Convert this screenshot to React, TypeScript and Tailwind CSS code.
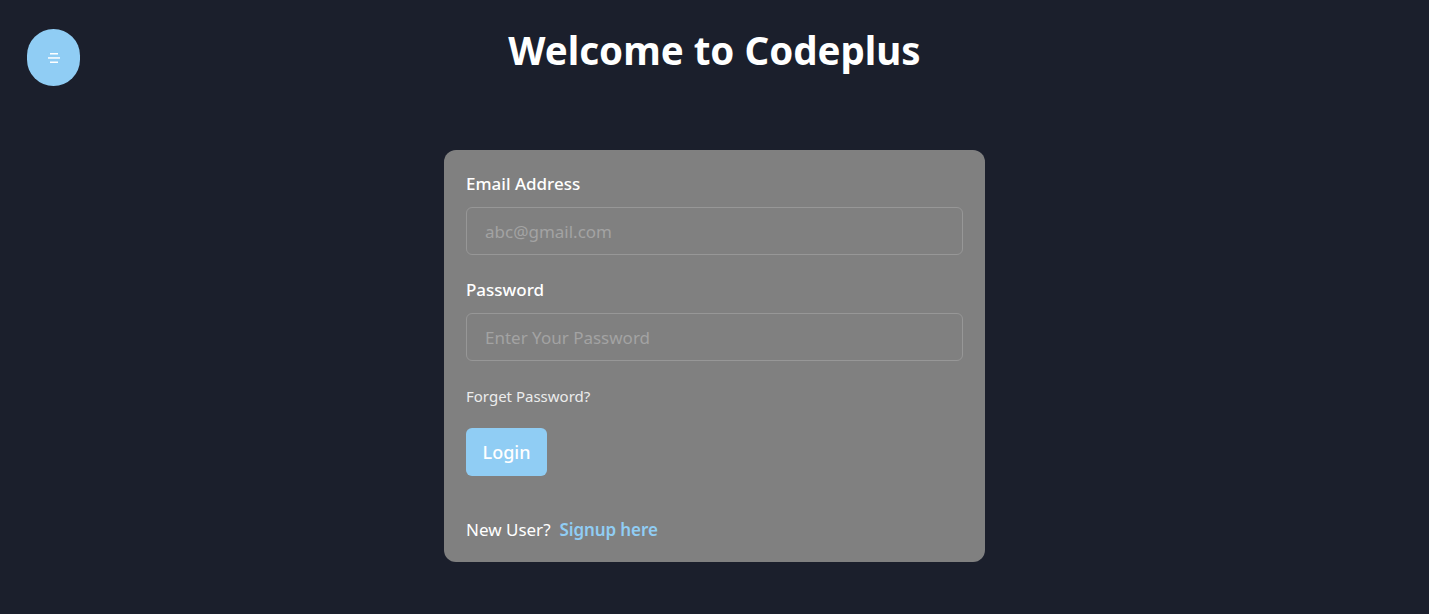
import React from "react";

export default function App() {
  return (
    <div
      className="relative min-h-[614px] w-full bg-[#1b1f2c] text-white"
      style={{ fontFamily: '"Noto Sans", "Open Sans", sans-serif' }}
    >
      <button className="absolute left-[27px] top-[29px] flex h-[57px] w-[53px] items-center justify-center rounded-full bg-[#90cdf4]">
        <svg width="14" height="12" viewBox="0 0 14 12">
          <rect x="3" y="1" width="8" height="1.5" fill="white" />
          <rect x="1" y="5.2" width="12" height="1.5" fill="white" />
          <rect x="3" y="9.5" width="8" height="1.5" fill="white" />
        </svg>
      </button>
      <h1 className="pt-[22px] text-center text-[38.5px] font-bold leading-[56px] text-white">
        Welcome to Codeplus
      </h1>
      <div className="mx-auto mt-[72px] flex w-[541px] flex-col rounded-xl bg-[#808080] px-[22px] pb-[19px] pt-[21px]">
        <label className="text-[17px] font-medium leading-[26px]">Email Address</label>
        <input
          className="mt-[10px] h-[48px] w-full rounded-md border border-[#979797] bg-transparent px-[18px] text-[17px] text-white outline-none placeholder:text-[#a3a3a3]"
          placeholder="abc@gmail.com"
        />
        <label className="mt-[22px] text-[17px] font-medium leading-[26px]">Password</label>
        <input
          type="password"
          className="mt-[10px] h-[48px] w-full rounded-md border border-[#979797] bg-transparent px-[18px] text-[17px] text-white outline-none placeholder:text-[#a3a3a3]"
          placeholder="Enter Your Password"
        />
        <div className="mt-[23px] text-[15px] leading-[24px] text-[#ececec]">Forget Password?</div>
        <button className="mt-[20px] h-[48px] w-[81px] rounded-md bg-[#90cdf4] text-[18px] font-medium text-white">
          Login
        </button>
        <div className="mt-[41px] flex items-center text-[17px] leading-[26px]">
          <span>New User?</span>
          <span className="ml-[9px] font-semibold tracking-[-0.1px] text-[#90cdf4]">Signup here</span>
        </div>
      </div>
    </div>
  );
}
